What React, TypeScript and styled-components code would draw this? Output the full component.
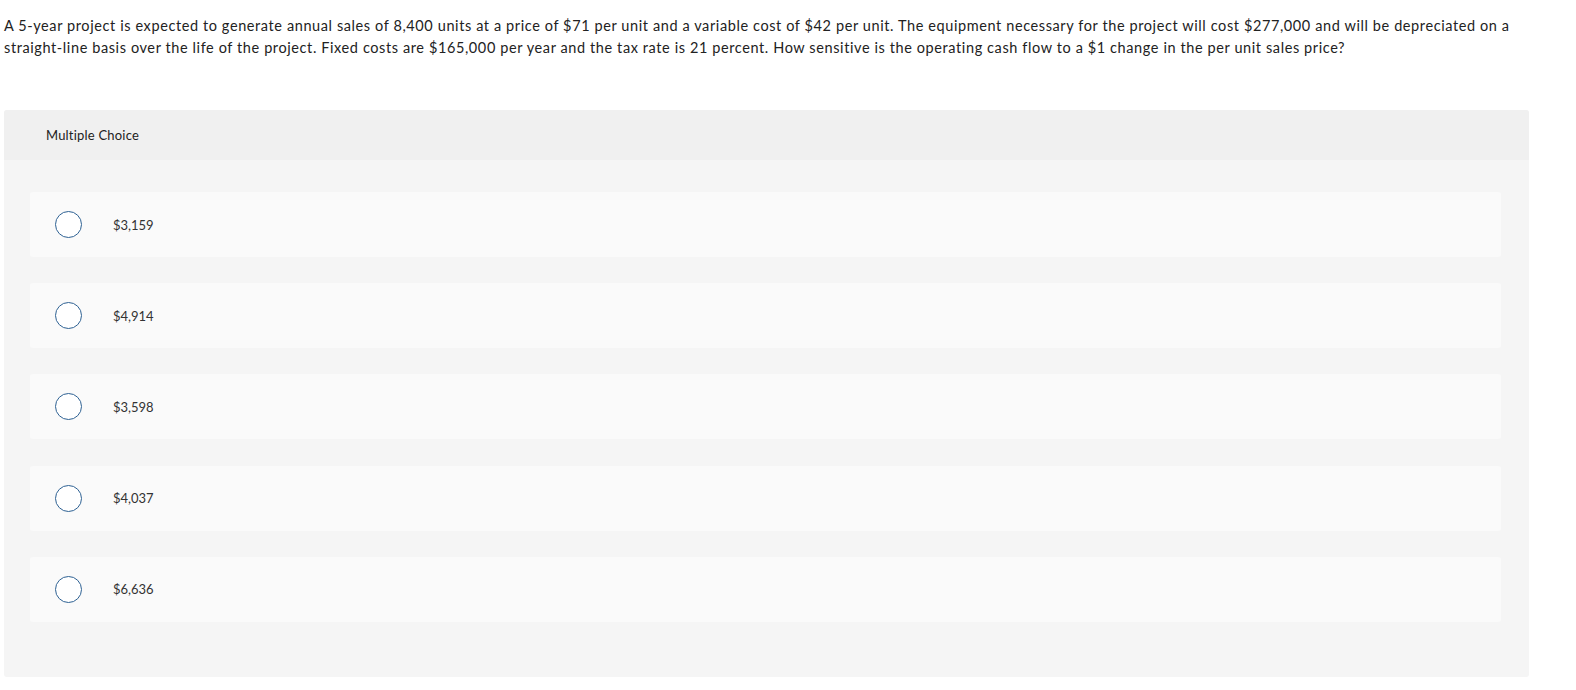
import React from "react";
import styled, { createGlobalStyle } from "styled-components";

const Global = createGlobalStyle`
  html, body { margin: 0; padding: 0; background: #fff; }
  body { font-family: Lato, "Open Sans", sans-serif; color: #222; }
`;

const Page = styled.div`
  padding: 15px 47px 0 4px;
`;

const Question = styled.p`
  margin: 0;
  font-size: 14.5px;
  letter-spacing: 0.6px;
  line-height: 22px;
  color: #222;
`;

const Panel = styled.section`
  margin-top: 51px;
  width: 1525px;
  background: #f5f5f5;
  border-radius: 3px;
  padding-bottom: 55px;
`;

const Header = styled.div`
  height: 50px;
  background: #f0f0f0;
  border-radius: 3px 3px 0 0;
  display: flex;
  align-items: center;
  padding-left: 42px;
  font-size: 13px;
  letter-spacing: 0.2px;
  color: #222;
`;

const Options = styled.div`
  display: flex;
  flex-direction: column;
  gap: 26.2px;
  padding: 32px 28px 0 26px;
`;

const Option = styled.label`
  display: flex;
  align-items: center;
  height: 65px;
  background: #fafafa;
  border-radius: 3px;
  padding-left: 25px;
  cursor: pointer;
`;

const Radio = styled.span`
  width: 25px;
  height: 25px;
  border: 1.5px solid #2e6193;
  border-radius: 50%;
  background: #fff;
  flex-shrink: 0;
`;

const Value = styled.span`
  margin-left: 31px;
  font-size: 13px;
  color: #333;
`;

const choices = ["$3,159", "$4,914", "$3,598", "$4,037", "$6,636"];

export default function App() {
  return (
    <>
      <Global />
      <Page>
        <Question>
          A 5-year project is expected to generate annual sales of 8,400 units at a price of $71 per unit and a variable cost of $42 per unit. The equipment necessary for the project will cost $277,000 and will be depreciated on a straight-line basis over the life of the project. Fixed costs are $165,000 per year and the tax rate is 21 percent. How sensitive is the operating cash flow to a $1 change in the per unit sales price?
        </Question>
        <Panel>
          <Header>Multiple Choice</Header>
          <Options>
            {choices.map((c) => (
              <Option key={c}>
                <Radio />
                <Value>{c}</Value>
              </Option>
            ))}
          </Options>
        </Panel>
      </Page>
    </>
  );
}
